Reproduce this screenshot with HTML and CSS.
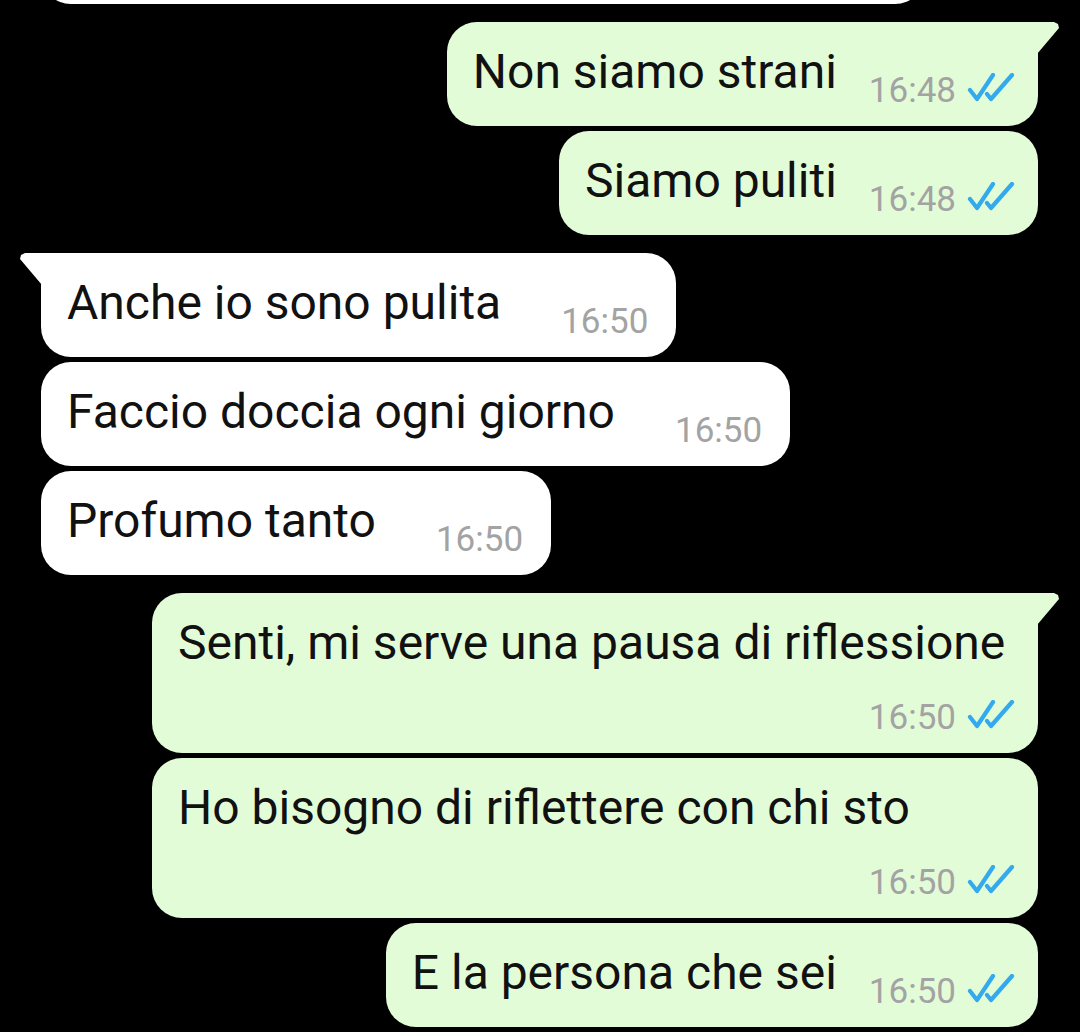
FILE: index.html
```html
<!DOCTYPE html>
<html lang="it">
<head>
  <meta charset="UTF-8" />
  <meta name="viewport" content="width=device-width, initial-scale=1.0"/>
  <title>Chat</title>
  <link rel="stylesheet" href="styles.css">
</head>
<body>
  <div class="chat">
    <div class="msg msg--in msg--cut-top"></div>

    <div class="group">
      <div class="msg msg--out msg--tail">
        <span class="text">Non siamo strani</span>
        <span class="meta">
          <span class="time">16:48</span>
          <svg class="ticks" viewBox="0 0 48 30"><path d="M3 17 L10 26 L26 2 M20 21 L24 26 L45 2"/></svg>
        </span>
      </div>
      <div class="msg msg--out">
        <span class="text">Siamo puliti</span>
        <span class="meta">
          <span class="time">16:48</span>
          <svg class="ticks" viewBox="0 0 48 30"><path d="M3 17 L10 26 L26 2 M20 21 L24 26 L45 2"/></svg>
        </span>
      </div>
    </div>

    <div class="group">
      <div class="msg msg--in msg--tail">
        <span class="text">Anche io sono pulita</span>
        <span class="meta"><span class="time">16:50</span></span>
      </div>
      <div class="msg msg--in">
        <span class="text">Faccio doccia ogni giorno</span>
        <span class="meta"><span class="time">16:50</span></span>
      </div>
      <div class="msg msg--in">
        <span class="text">Profumo tanto</span>
        <span class="meta"><span class="time">16:50</span></span>
      </div>
    </div>

    <div class="group">
      <div class="msg msg--out msg--tail msg--stacked">
        <span class="text">Senti, mi serve una pausa di riflessione</span>
        <span class="meta">
          <span class="time">16:50</span>
          <svg class="ticks" viewBox="0 0 48 30"><path d="M3 17 L10 26 L26 2 M20 21 L24 26 L45 2"/></svg>
        </span>
      </div>
      <div class="msg msg--out msg--stacked">
        <span class="text">Ho bisogno di riflettere con chi sto</span>
        <span class="meta">
          <span class="time">16:50</span>
          <svg class="ticks" viewBox="0 0 48 30"><path d="M3 17 L10 26 L26 2 M20 21 L24 26 L45 2"/></svg>
        </span>
      </div>
      <div class="msg msg--out">
        <span class="text">E la persona che sei</span>
        <span class="meta">
          <span class="time">16:50</span>
          <svg class="ticks" viewBox="0 0 48 30"><path d="M3 17 L10 26 L26 2 M20 21 L24 26 L45 2"/></svg>
        </span>
      </div>
      <div class="msg msg--out msg--stacked">
        <span class="text">&nbsp;</span>
      </div>
    </div>
  </div>
</body>
</html>
```

FILE: styles.css
```css
html, body {
  margin: 0;
  background: #000;
  height: 100%;
  overflow: hidden;
}
body {
  font-family: Roboto, "Noto Sans", sans-serif;
}
.chat {
  display: flex;
  flex-direction: column;
  gap: 18px;
  width: 1080px;
}
.group {
  display: flex;
  flex-direction: column;
  gap: 5px;
}
.msg {
  position: relative;
  display: flex;
  align-items: flex-end;
  box-sizing: border-box;
  max-width: 886px;
  padding: 22px 23px 15px 26px;
  border-radius: 30px;
}
.msg--out {
  align-self: flex-end;
  margin-right: 42px;
  background: #e3fcd8;
}
.msg--in {
  align-self: flex-start;
  margin-left: 41px;
  padding-right: 28px;
  background: #fff;
}
.msg--cut-top {
  width: 884px;
  height: 100px;
  margin-top: -96px;
}
.text {
  font-size: 48px;
  line-height: 56px;
  color: #111;
  margin-bottom: 11px;
  white-space: nowrap;
}
.meta {
  display: flex;
  align-items: center;
  margin-left: 32px;
  flex-shrink: 0;
}
.msg--in .meta {
  margin-left: 60px;
}
.time {
  font-size: 35px;
  line-height: 40px;
  color: #a3a3a3;
}
.ticks {
  width: 48px;
  height: 30px;
  margin-left: 11px;
  margin-top: -6px;
  fill: none;
  stroke: #34aaee;
  stroke-width: 4.2;
  stroke-linecap: round;
  stroke-linejoin: round;
}
.msg--stacked {
  width: 886px;
  flex-direction: column;
  align-items: flex-start;
}
.msg--stacked .meta {
  align-self: flex-end;
  margin-top: 16px;
}

/* tails */
.msg--tail.msg--out {
  border-top-right-radius: 0;
}
.msg--tail.msg--in {
  border-top-left-radius: 0;
}
.msg--tail::before {
  content: "";
  position: absolute;
  top: 0;
  width: 22px;
  height: 32px;
  background: inherit;
}
.msg--out.msg--tail::before {
  right: -21px;
  clip-path: polygon(0 0, 17px 0, 21px 2px, 22px 6px, 0 100%);
}
.msg--in.msg--tail::before {
  left: -21px;
  clip-path: polygon(22px 0, 5px 0, 1px 2px, 0 6px, 22px 100%);
}
```
